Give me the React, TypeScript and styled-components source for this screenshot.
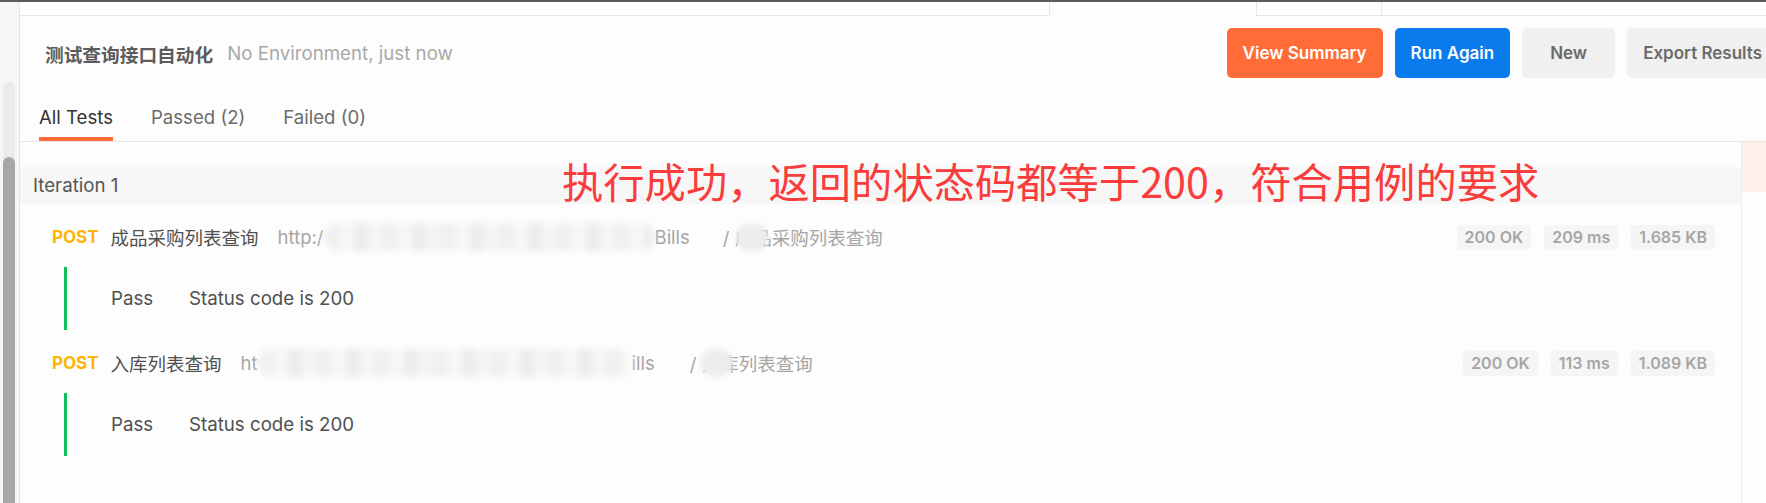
import React from "react";
import styled, { createGlobalStyle } from "styled-components";

const GlobalStyle = createGlobalStyle`
  html, body {
    margin: 0;
    padding: 0;
    background: #fdfdfd;
  }
  body {
    font-family: Inter, "Noto Sans CJK SC", "Noto Sans", sans-serif;
  }
  * {
    box-sizing: border-box;
  }
`;

const Page = styled.div`
  display: flex;
  width: 1766px;
  height: 503px;
  overflow: hidden;
  border-top: 2px solid #5c5c5c;
  background: #fdfdfd;
`;

const Gutter = styled.div`
  width: 20px;
  flex-shrink: 0;
  display: flex;
  flex-direction: column;
  padding: 80px 0 0 3px;
  background: #f6f6f6;
  border-right: 1px solid #e4e4e4;
`;

const ScrollTrack = styled.div`
  flex: 1;
  width: 12px;
  display: flex;
  flex-direction: column;
  background: #ebebeb;
  border-radius: 6px 6px 0 0;
`;

const ScrollThumb = styled.div`
  flex: 1;
  margin-top: 75px;
  background: #a7a7a7;
  border-radius: 6px 6px 0 0;
`;

const Main = styled.div`
  flex: 1;
  min-width: 0;
  display: flex;
  flex-direction: column;
`;

const TopStrip = styled.div`
  height: 14px;
  display: flex;
`;

const StripCell = styled.div<{ $w?: number; $left?: boolean; $right?: boolean; $line?: boolean }>`
  width: ${(p) => (p.$w ? `${p.$w}px` : "auto")};
  flex: ${(p) => (p.$w ? "none" : 1)};
  background: ${(p) => (p.$line ? "#fff" : "transparent")};
  border-bottom: ${(p) => (p.$line ? "1px solid #e6e6e6" : "none")};
  border-left: ${(p) => (p.$left ? "1px solid #e6e6e6" : "none")};
  border-right: ${(p) => (p.$right ? "1px solid #e6e6e6" : "none")};
`;

const Header = styled.div`
  height: 62px;
  display: flex;
  align-items: center;
  padding: 12px 0 0 25px;
`;

const Title = styled.span`
  font-size: 18.7px;
  font-weight: 700;
  color: #5c5c5c;
`;

const EnvText = styled.span`
  margin-left: 14px;
  font-size: 18.7px;
  color: #a8a8a8;
`;

const ButtonGroup = styled.div`
  margin-left: auto;
  margin-right: -12px;
  display: flex;
  gap: 12px;
`;

const Button = styled.button<{ $kind: "orange" | "blue" | "plain" }>`
  height: 50px;
  min-width: 93px;
  padding: 0 16px;
  border: none;
  border-radius: 5px;
  font-family: Inter, "Noto Sans", sans-serif;
  font-size: 17px;
  font-weight: 600;
  cursor: pointer;
  background: ${(p) =>
    p.$kind === "orange" ? "#ff6c37" : p.$kind === "blue" ? "#097bed" : "#f0f0f0"};
  color: ${(p) => (p.$kind === "plain" ? "#6b6b6b" : "#fff")};
`;

const TabBar = styled.div`
  margin-top: 18px;
  display: flex;
  gap: 38px;
  padding-left: 19px;
  border-bottom: 1px solid #e6e6e6;
`;

const Tab = styled.div<{ $active?: boolean }>`
  height: 45px;
  display: flex;
  align-items: center;
  font-size: 18.6px;
  color: ${(p) => (p.$active ? "#333" : "#6b6b6b")};
  border-bottom: 4px solid ${(p) => (p.$active ? "#ff6c37" : "transparent")};
`;

const Content = styled.div`
  flex: 1;
  display: flex;
`;

const Results = styled.div`
  flex: 1;
  position: relative;
  padding-top: 25px;
  border-right: 1px solid #ececec;
`;

const RightRail = styled.div`
  width: 24px;
  flex-shrink: 0;
`;

const PinkBlock = styled.div`
  height: 50px;
  background: #fdefea;
`;

const IterationBand = styled.div`
  height: 37px;
  display: flex;
  align-items: center;
  padding-left: 13px;
  background: #f7f7f7;
  font-size: 18.7px;
  color: #555;
`;

const RequestRow = styled.div`
  height: 40px;
  margin-top: 13px;
  display: flex;
  align-items: center;
  padding: 0 26px 0 32px;
  font-size: 18.5px;
  white-space: nowrap;
`;

const Method = styled.span`
  font-size: 17px;
  font-weight: 700;
  color: #ffb400;
`;

const ReqName = styled.span`
  margin-left: 12px;
  font-size: 18.5px;
  color: #505050;
`;

const Url = styled.span`
  margin-left: 19px;
  display: flex;
  align-items: center;
  color: #a6a6a6;
`;

const Blur = styled.span<{ $w: number }>`
  display: inline-block;
  width: ${(p) => p.$w}px;
  height: 28px;
  border-radius: 14px;
  filter: blur(3px);
  background: repeating-linear-gradient(
    90deg,
    #f0f0f0 0 16px,
    #f7f7f7 16px 30px,
    #ececec 30px 44px,
    #f5f5f5 44px 58px
  );
`;

const Crumb = styled.span<{ $gap: number }>`
  position: relative;
  margin-left: ${(p) => p.$gap}px;
  font-size: 18.5px;
  color: #a6a6a6;
`;

const CrumbBlur = styled.span<{ $left: number; $w: number }>`
  position: absolute;
  top: 50%;
  left: ${(p) => p.$left}px;
  width: ${(p) => p.$w}px;
  height: 28px;
  margin-top: -14px;
  border-radius: 14px;
  background: #ededed;
  filter: blur(2.5px);
`;

const Stats = styled.div`
  margin-left: auto;
  display: flex;
  gap: 13px;
`;

const Badge = styled.span`
  height: 25px;
  display: flex;
  align-items: center;
  padding: 0 8px;
  border-radius: 4px;
  background: #f5f5f5;
  font-size: 16px;
  font-weight: 600;
  color: #a6a6a6;
`;

const TestItem = styled.div`
  height: 63px;
  margin: 10px 0 0 44px;
  padding-left: 44px;
  display: flex;
  align-items: center;
  border-left: 3px solid #10c058;
  font-size: 18.7px;
  color: #505050;
`;

const PassLabel = styled.span`
  width: 78px;
`;

const Annotation = styled.div`
  position: absolute;
  left: 542px;
  top: 18px;
  font-family: "Noto Sans CJK SC", sans-serif;
  font-size: 41.3px;
  line-height: 1;
  color: #fa3c3c;
  white-space: nowrap;
`;

interface RequestResult {
  name: string;
  urlHead: string;
  blurWidth: number;
  urlTail: string;
  crumbGap: number;
  crumb: string;
  crumbBlur: { left: number; w: number };
  stats: string[];
  test: string;
}

const requests: RequestResult[] = [
  {
    name: "成品采购列表查询",
    urlHead: "http:/",
    blurWidth: 331,
    urlTail: "Bills",
    crumbGap: 33,
    crumb: "/ 成品采购列表查询",
    crumbBlur: { left: 13, w: 32 },
    stats: ["200 OK", "209 ms", "1.685 KB"],
    test: "Status code is 200",
  },
  {
    name: "入库列表查询",
    urlHead: "ht",
    blurWidth: 374,
    urlTail: "ills",
    crumbGap: 35,
    crumb: "/ 入库列表查询",
    crumbBlur: { left: 10, w: 33 },
    stats: ["200 OK", "113 ms", "1.089 KB"],
    test: "Status code is 200",
  },
];

const App: React.FC = () => {
  return (
    <>
      <GlobalStyle />
      <Page>
        <Gutter>
          <ScrollTrack>
            <ScrollThumb />
          </ScrollTrack>
        </Gutter>
        <Main>
          <TopStrip>
            <StripCell $w={1030} $right $line />
            <StripCell $w={206} />
            <StripCell $w={126} $left $right $line />
            <StripCell $line />
          </TopStrip>
          <Header>
            <Title>测试查询接口自动化</Title>
            <EnvText>No Environment, just now</EnvText>
            <ButtonGroup>
              <Button $kind="orange">View Summary</Button>
              <Button $kind="blue">Run Again</Button>
              <Button $kind="plain">New</Button>
              <Button $kind="plain">Export Results</Button>
            </ButtonGroup>
          </Header>
          <TabBar>
            <Tab $active>All Tests</Tab>
            <Tab>Passed (2)</Tab>
            <Tab>Failed (0)</Tab>
          </TabBar>
          <Content>
            <Results>
              <IterationBand>Iteration 1</IterationBand>
              {requests.map((r, i) => (
                <React.Fragment key={i}>
                  <RequestRow>
                    <Method>POST</Method>
                    <ReqName>{r.name}</ReqName>
                    <Url>
                      {r.urlHead}
                      <Blur $w={r.blurWidth} />
                      {r.urlTail}
                    </Url>
                    <Crumb $gap={r.crumbGap}>
                      {r.crumb}
                      <CrumbBlur $left={r.crumbBlur.left} $w={r.crumbBlur.w} />
                    </Crumb>
                    <Stats>
                      {r.stats.map((s) => (
                        <Badge key={s}>{s}</Badge>
                      ))}
                    </Stats>
                  </RequestRow>
                  <TestItem>
                    <PassLabel>Pass</PassLabel>
                    {r.test}
                  </TestItem>
                </React.Fragment>
              ))}
              <Annotation>执行成功，返回的状态码都等于200，符合用例的要求</Annotation>
            </Results>
            <RightRail>
              <PinkBlock />
            </RightRail>
          </Content>
        </Main>
      </Page>
    </>
  );
};

export default App;
